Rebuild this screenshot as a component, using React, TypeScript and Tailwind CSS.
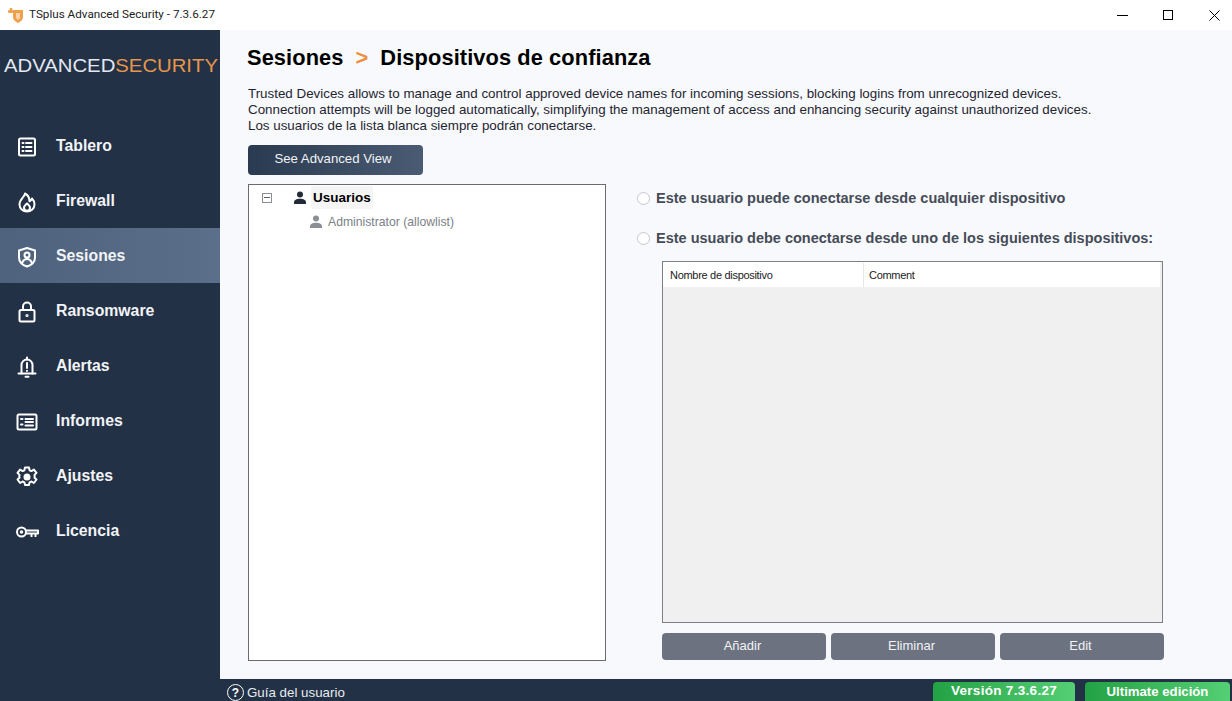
import React from "react";

const Ico = ({ children, className = "" }: { children: React.ReactNode; className?: string }) => (
  <svg viewBox="0 0 24 24" fill="none" stroke="currentColor" strokeWidth={2} strokeLinecap="round" strokeLinejoin="round" className={`w-[24px] h-[24px] text-white ${className}`}>
    {children}
  </svg>
);

const navItems: { label: string; active?: boolean; icon: React.ReactNode }[] = [
  {
    label: "Tablero",
    icon: (
      <Ico>
        <rect x="4" y="3.500" width="16" height="17" rx="1.500" />
        <path d="M7.500 8h1M11 8h5.500M7.500 12h1M11 12h5.500M7.500 16h1M11 16h5.500" />
      </Ico>
    ),
  },
  {
    label: "Firewall",
    icon: (
      <Ico>
        <path d="M10 3.500c0 3-5.500 5.500-5.500 11a7.500 7 0 0 0 15 0c0-2.500-1-4.500-2.500-6-.5 1.500-1.200 2.200-2.500 2.800C14.500 8 13 5 10 3.500z" />
        <path d="M12 13.500c-1.500 1.500-3 2.500-3 4.200a3 3 0 0 0 6 0c0-1.700-1.500-2.700-3-4.200z" />
      </Ico>
    ),
  },
  {
    label: "Sesiones",
    active: true,
    icon: (
      <Ico>
        <path d="M12 3l8 2.500v7c0 4.500-3.500 7.500-8 9-4.500-1.500-8-4.500-8-9v-7z" />
        <circle cx="12" cy="10" r="2.500" />
        <path d="M7.500 17c1-2 2.800-3 4.500-3s3.500 1 4.500 3" />
      </Ico>
    ),
  },
  {
    label: "Ransomware",
    icon: (
      <Ico>
        <rect x="4.500" y="10" width="15" height="11.500" rx="1.500" />
        <path d="M8 10V6.500a4 4 0 0 1 8 0V10" />
        <circle cx="12" cy="15.500" r="0.600" />
      </Ico>
    ),
  },
  {
    label: "Alertas",
    icon: (
      <Ico>
        <path d="M6.500 18.500V10a5.500 5.500 0 0 1 11 0v8.500" />
        <path d="M3.500 18.500h17M12 2.500v2M10.500 21.800h3M12 8v5M12 15.800v.2" />
      </Ico>
    ),
  },
  {
    label: "Informes",
    icon: (
      <Ico>
        <rect x="2.500" y="4.500" width="19" height="15" rx="1.500" />
        <path d="M6 9h1.500M10.500 9H18M6 14.500h1.500M10.500 12h7.500M10.500 15.500H18" />
      </Ico>
    ),
  },
  {
    label: "Ajustes",
    icon: (
      <Ico>
        <path d="M10 2.500h4l.6 2.800 1.800.8 2.500-1.500 2.600 3.300-2 2 .2 2-.2 .8 2 1.800-2.600 3.500-2.500-1.500-1.800.8-.6 2.700h-4l-.6-2.700-1.800-.8-2.500 1.500-2.600-3.500 2-1.800-.2-.8.2-2-2-2 2.600-3.300 2.500 1.500 1.800-.8z" />
        <circle cx="12" cy="12" r="2.500" fill="currentColor" />
      </Ico>
    ),
  },
  {
    label: "Licencia",
    icon: (
      <Ico>
        <circle cx="6.500" cy="12" r="4.500" />
        <circle cx="6.500" cy="12" r="0.800" />
        <path d="M11 10.500h12v3h-2.500v2.500M16.500 13.500v2.500M11 13.500h9.500" strokeLinecap="square" />
      </Ico>
    ),
  },
];

const User = ({ className }: { className: string }) => (
  <svg viewBox="0 0 14 14" className={`w-[14px] h-[14px] ${className}`} fill="currentColor">
    <circle cx="7" cy="3.500" r="3" />
    <path d="M1 13v-1.500C1 9 3.500 7.800 7 7.800s6 1.200 6 3.700V13z" />
  </svg>
);

const Radio = ({ label }: { label: string }) => (
  <div className="flex items-center gap-[6px] h-[20px] ml-[1px]">
    <span className="w-[13px] h-[13px] rounded-full border border-[#c4c7cc] bg-white" />
    <span className="pt-[2px] text-[14.500px] font-bold text-[#454b57] whitespace-nowrap">{label}</span>
  </div>
);

const ActionButton = ({ label }: { label: string }) => (
  <button className="w-[164px] h-[27px] pb-[2px] pr-[3px] rounded-[4px] bg-[#6c7280] text-[#f1f3f5] text-[13px]">{label}</button>
);

export default function App() {
  return (
    <div className="w-[1232px] h-[701px] flex flex-col overflow-hidden bg-white font-['Liberation_Sans',sans-serif]">
      {/* title bar */}
      <div className="h-[30px] flex items-center bg-white shrink-0">
        <svg viewBox="0 0 18 18" className="w-[18px] h-[18px] ml-[7px]">
          <path d="M6 4h10v7c0 3-3 5-5 6-2-1-5-3-5-6z" fill="#f0a04b" />
          <path d="M1 5.500h5M4 2v5" stroke="#f0a04b" strokeWidth="2.500" />
          <path d="M9 7h4v4c0 1.500-1 2-2 3-1-1-2-1.500-2-3z" fill="#fff" opacity=".55" />
        </svg>
        <span className="ml-[4px] font-['Roboto',sans-serif] text-[11.700px] text-[#222]">TSplus Advanced Security - 7.3.6.27</span>
        <div className="ml-auto mr-[-5px] flex items-center h-full">
          <div className="w-[45px] flex justify-center"><span className="w-[11px] h-[1px] bg-black" /></div>
          <div className="w-[46px] flex justify-center"><span className="w-[10px] h-[10px] border border-black" /></div>
          <div className="w-[46px] flex justify-center">
            <svg viewBox="0 0 11 11" className="w-[11px] h-[11px]" stroke="#000" strokeWidth="1"><path d="M.5.500l10 10M10.500.500l-10 10" /></svg>
          </div>
        </div>
      </div>

      <div className="flex-1 flex min-h-0">
        {/* sidebar */}
        <aside className="w-[220px] shrink-0 bg-[#233146] flex flex-col">
          <div className="h-[88px] flex items-center pl-[4px]">
            <span className="inline-block origin-left scale-x-[1.16] text-[17.500px] leading-none pb-[14px] whitespace-nowrap">
              <span className="text-[#e3e9f2]">ADVANCED</span>
              <span className="text-[#e8964a]">SECURITY</span>
            </span>
          </div>
          <nav className="flex flex-col">
            {navItems.map((item) => (
              <div
                key={item.label}
                className={`h-[55px] flex items-center pl-[15px] pt-[2px] gap-[17px] ${item.active ? "bg-gradient-to-r from-[#4f627d] to-[#5c6f8a]" : ""}`}
              >
                {item.icon}
                <span className="pb-[2px] text-[15.800px] font-bold text-[#f2f4f7]">{item.label}</span>
              </div>
            ))}
          </nav>
        </aside>

        <div className="flex-1 flex flex-col min-w-0">
          {/* main */}
          <main className="flex-1 bg-[#f7f9fc] pl-[28px] flex flex-col min-h-0">
            <h1 className="mt-[13px] -ml-[1px] h-[30px] flex items-center text-[21.800px] font-bold text-black tracking-[0.1px]">
              <span>Sesiones</span>
              <span className="mx-[12px] text-[#ef8f3e]">&gt;</span>
              <span>Dispositivos de confianza</span>
            </h1>
            <div className="mt-[13px] text-[13.360px] leading-[16px] text-[#1f2530]">
              <p>Trusted Devices allows to manage and control approved device names for incoming sessions, blocking logins from unrecognized devices.</p>
              <p>Connection attempts will be logged automatically, simplifying the management of access and enhancing security against unauthorized devices.</p>
              <p>Los usuarios de la lista blanca siempre podrán conectarse.</p>
            </div>
            <button className="mt-[11px] w-[175px] h-[30px] pb-[3px] pr-[5px] rounded-[4px] bg-gradient-to-r from-[#2a3a50] to-[#4a5b73] text-[#f1f3f5] text-[13.200px]">
              See Advanced View
            </button>
            <div className="mt-[9px] flex">
              {/* tree */}
              <div className="w-[358px] h-[477px] bg-white border border-[#6b6b6b] pt-[1px]">
                <div className="flex items-center h-[23px]">
                  <span className="ml-[13px] w-[10px] h-[10px] border border-[#8a8f96] flex items-center justify-center">
                    <span className="w-[6px] h-[1px] bg-[#5a5f66]" />
                  </span>
                  <User className="ml-[21px] text-[#222b38]" />
                  <span className="ml-[4px] px-[2px] h-[23px] pt-[2px] flex items-center bg-[#f5f5f5] text-[13.500px] font-bold text-black">Usuarios</span>
                </div>
                <div className="flex items-center h-[25px]">
                  <User className="ml-[60px] text-[#8b8f96]" />
                  <span className="ml-[5px] pt-[2px] text-[12.200px] text-[#7b7f86]">Administrator (allowlist)</span>
                </div>
              </div>
              {/* right panel */}
              <div className="ml-[30px] flex flex-col pt-[4px]">
                <Radio label="Este usuario puede conectarse desde cualquier dispositivo" />
                <div className="h-[20px]" />
                <Radio label="Este usuario debe conectarse desde uno de los siguientes dispositivos:" />
                <div className="ml-[26px] mt-[13px] w-[501px] h-[362px] border border-[#7d7f84] bg-[#f0f0f0] flex flex-col">
                  <div className="h-[25px] pt-[1px] flex bg-white mr-[2px] text-[11px] tracking-[-0.3px] text-[#1b1b1b] items-center">
                    <div className="w-[201px] h-full flex items-center pl-[7px] border-r border-[#e6e6e6]">Nombre de dispositivo</div>
                    <div className="pl-[5px]">Comment</div>
                  </div>
                </div>
                <div className="ml-[26px] mt-[10px] flex gap-[5px]">
                  <ActionButton label="Añadir" />
                  <ActionButton label="Eliminar" />
                  <ActionButton label="Edit" />
                </div>
              </div>
            </div>
          </main>

          {/* footer */}
          <footer className="h-[22px] shrink-0 bg-[#233146] flex items-end">
            <div className="flex items-center pl-[7px] h-[22px] pt-[5px]">
              <span className="w-[17px] h-[17px] rounded-full border-[1.500px] border-white text-white text-[12px] font-bold flex items-center justify-center">?</span>
              <span className="ml-[3px] text-[13.330px] text-[#e8ebef]">Guía del usuario</span>
            </div>
            <div className="ml-auto flex gap-[10px] pr-[2px]">
              <div className="w-[142px] h-[19px] rounded-t-[4px] bg-gradient-to-r from-[#22a244] to-[#55cf74] text-white text-[13.500px] tracking-[0.3px] font-bold flex items-center justify-center">Versión 7.3.6.27</div>
              <div className="w-[145px] h-[19px] rounded-t-[4px] bg-gradient-to-r from-[#22a244] to-[#55cf74] text-white text-[13.200px] font-bold flex items-center justify-center">Ultimate edición</div>
            </div>
          </footer>
        </div>
      </div>
    </div>
  );
}
